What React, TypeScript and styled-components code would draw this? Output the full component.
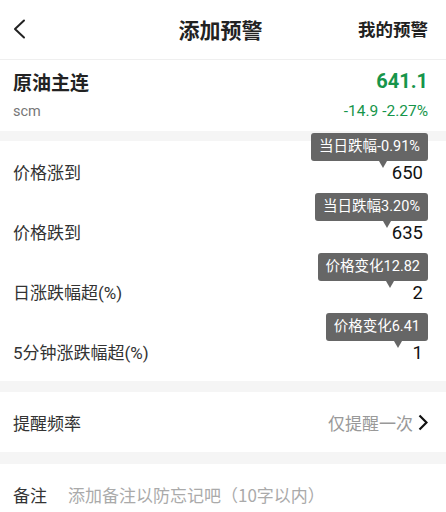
import React from "react";
import styled, { createGlobalStyle } from "styled-components";

const GlobalStyle = createGlobalStyle`
  html, body { margin: 0; padding: 0; background: #fff; }
  body { font-family: "Roboto", "Noto Sans CJK SC", sans-serif; -webkit-font-smoothing: antialiased; }
  * { box-sizing: border-box; }
`;

const Page = styled.div`
  width: 446px;
  min-height: 512px;
  background: #fff;
  display: flex;
  flex-direction: column;
`;

const Header = styled.header`
  height: 60px;
  border-bottom: 1px solid #efefef;
  display: grid;
  grid-template-columns: 1fr auto 1fr;
  align-items: center;
  padding: 0 18px 2px 13px;
`;

const BackButton = styled.button`
  border: 0;
  background: none;
  padding: 0;
  width: 14px;
  height: 20px;
  justify-self: start;
  display: flex;
  align-items: center;
`;

const Title = styled.h1`
  margin: 0;
  font-size: 21px;
  font-weight: 700;
  color: #222;
  font-family: "Noto Sans CJK SC", sans-serif;
`;

const HeaderLink = styled.span`
  justify-self: end;
  font-size: 17.5px;
  font-weight: 700;
  color: #222;
  font-family: "Noto Sans CJK SC", sans-serif;
`;

const Quote = styled.section`
  height: 71px;
  padding: 10px 18px 12px 13px;
  display: flex;
  flex-direction: column;
  gap: 11px;
`;

const QuoteLine = styled.div<{ $h: number }>`
  display: flex;
  justify-content: space-between;
  align-items: center;
  height: ${(p) => p.$h}px;
`;

const Name = styled.span`
  font-size: 19px;
  font-weight: 700;
  color: #222;
  font-family: "Noto Sans CJK SC", sans-serif;
`;

const Price = styled.span`
  font-size: 20px;
  font-weight: 700;
  color: #16954a;
`;

const Code = styled.span`
  font-size: 14.5px;
  color: #777;
`;

const Change = styled.span`
  font-size: 15.5px;
  color: #16954a;
`;

const Gap = styled.div<{ $h: number }>`
  height: ${(p) => p.$h}px;
  background: #f5f5f5;
`;

const Row = styled.div`
  position: relative;
  height: 60px;
  padding: 1px 18px 0 13px;
  display: flex;
  align-items: center;
  justify-content: space-between;
  background: #fff;
`;

const Label = styled.span`
  font-size: 17px;
  color: #333;
`;

const Value = styled.span`
  font-size: 18.5px;
  color: #111;
  padding-right: 5px;
  padding-top: 3px;
`;

const Tip = styled.div`
  position: absolute;
  top: -8px;
  right: 18px;
  height: 28px;
  line-height: 28px;
  padding: 0 8px;
  background: #666;
  color: #fff;
  font-size: 14.5px;
  border-radius: 3px;
  white-space: nowrap;
  &::after {
    content: "";
    position: absolute;
    left: 68px;
    top: 28px;
    border-left: 4px solid transparent;
    border-right: 4px solid transparent;
    border-top: 7px solid #666;
  }
`;

const Muted = styled.span`
  font-size: 17px;
  color: #999;
`;

const RightGroup = styled.div`
  display: flex;
  align-items: center;
  gap: 5px;
`;

const NoteRow = styled(Row)`
  justify-content: flex-start;
  gap: 21px;
`;

const Placeholder = styled.span`
  font-size: 17px;
  color: #aaa;
  font-family: "Noto Sans CJK SC", sans-serif;
`;

const rows = [
  { label: "价格涨到", tip: "当日跌幅-0.91%", value: "650" },
  { label: "价格跌到", tip: "当日跌幅3.20%", value: "635" },
  { label: "日涨跌幅超(%)", tip: "价格变化12.82", value: "2" },
  { label: "5分钟涨跌幅超(%)", tip: "价格变化6.41", value: "1" },
];

export default function App() {
  return (
    <>
      <GlobalStyle />
      <Page>
        <Header>
          <BackButton aria-label="返回">
            <svg width="13" height="20" viewBox="0 0 13 20">
              <polyline points="11,1.5 2,10 11,18.5" fill="none" stroke="#222" strokeWidth="2" strokeLinecap="round" strokeLinejoin="round" />
            </svg>
          </BackButton>
          <Title>添加预警</Title>
          <HeaderLink>我的预警</HeaderLink>
        </Header>
        <Quote>
          <QuoteLine $h={22}>
            <Name>原油主连</Name>
            <Price>641.1</Price>
          </QuoteLine>
          <QuoteLine $h={16}>
            <Code>scm</Code>
            <Change>-14.9 -2.27%</Change>
          </QuoteLine>
        </Quote>
        <Gap $h={10} />
        {rows.map((r) => (
          <Row key={r.label}>
            <Label>{r.label}</Label>
            <Value>{r.value}</Value>
            <Tip>{r.tip}</Tip>
          </Row>
        ))}
        <Gap $h={11} />
        <Row>
          <Label>提醒频率</Label>
          <RightGroup>
            <Muted>仅提醒一次</Muted>
            <svg width="10" height="17" viewBox="0 0 10 17">
              <polyline points="1.5,1.5 8.5,8.5 1.5,15.5" fill="none" stroke="#111" strokeWidth="2.2" strokeLinejoin="miter" />
            </svg>
          </RightGroup>
        </Row>
        <Gap $h={12} />
        <NoteRow>
          <Label>备注</Label>
          <Placeholder>添加备注以防忘记吧（10字以内）</Placeholder>
        </NoteRow>
      </Page>
    </>
  );
}
